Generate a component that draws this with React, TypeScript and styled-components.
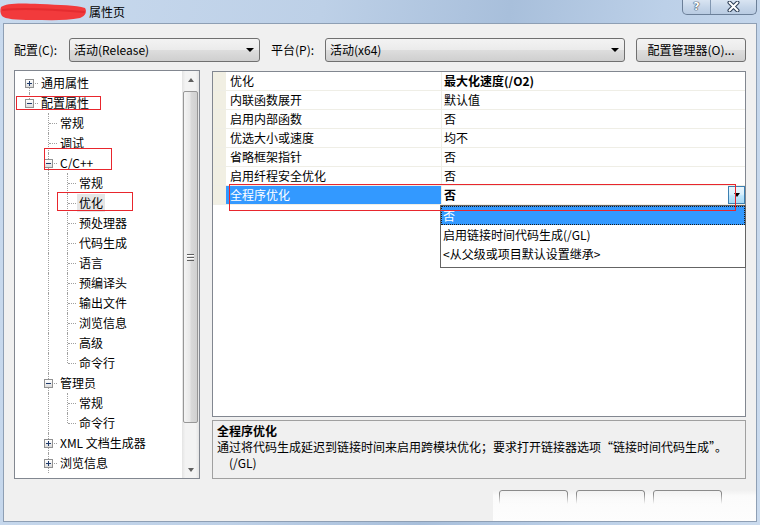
import React from 'react';
import styled, { createGlobalStyle } from 'styled-components';

const GlobalStyle = createGlobalStyle`
  html, body {
    margin: 0;
    padding: 0;
    background: #ffffff;
  }
  body {
    font-family: "Noto Sans CJK SC", "Microsoft YaHei", sans-serif;
    font-size: 12px;
    color: #000000;
  }
  * {
    box-sizing: border-box;
  }
`;

const Window = styled.div`
  position: relative;
  width: 760px;
  height: 525px;
  display: flex;
  flex-direction: column;
  overflow: hidden;
  background: linear-gradient(100deg, #c9daee 0%, #bdd0e7 38%, #a8bfdb 60%, #bcd0e8 78%, #cbdbee 100%);
`;

const TitleBar = styled.div`
  height: 23px;
  flex: none;
  display: flex;
  align-items: flex-start;
`;

const Scribble = styled.svg`
  flex: none;
  margin-top: 1px;
`;

const TitleText = styled.span`
  align-self: center;
  margin-left: 2px;
  line-height: 16px;
  color: #000;
`;

const CaptionGroup = styled.div`
  margin-left: auto;
  margin-right: 3px;
  margin-top: -1px;
  height: 16px;
  display: flex;
  border: 1px solid #6b7f98;
  border-top: none;
  border-radius: 0 0 5px 5px;
  overflow: hidden;
  background: linear-gradient(#dbe6f3, #c4d4e8 60%, #b9cbe2);
`;

const CaptionButton = styled.div<{ $w: number }>`
  width: ${(p) => p.$w}px;
  display: flex;
  align-items: center;
  justify-content: center;
  color: #fff;
  font-family: "DejaVu Sans", sans-serif;
  font-weight: bold;
  font-size: 11px;
  line-height: 14px;
  text-shadow: 0 0 1px #2d3e55, 0 0 1px #2d3e55, 0 0 1px #2d3e55;
  & + & {
    border-left: 1px solid #8196b0;
  }
`;

const Client = styled.div`
  flex: 1;
  margin: 0 3px 3px 3px;
  background: #f0f0f0;
  border: 1px solid #8e9fb4;
  display: flex;
  flex-direction: column;
  padding: 14px 10px 0 10px;
  min-height: 0;
`;

const Toolbar = styled.div`
  height: 24px;
  flex: none;
  display: flex;
  align-items: center;
`;

const FieldLabel = styled.span<{ $w: number; $gap?: number }>`
  width: ${(p) => p.$w}px;
  margin-left: ${(p) => p.$gap ?? 0}px;
  flex: none;
  line-height: 16px;
`;

const Combo = styled.div<{ $w: number }>`
  width: ${(p) => p.$w}px;
  height: 24px;
  flex: none;
  display: flex;
  align-items: center;
  padding: 0 5px 0 4px;
  border: 1px solid #707070;
  border-radius: 3px;
  background: linear-gradient(#f3f3f3 0%, #ebebeb 48%, #dddddd 52%, #cfcfcf 100%);
  line-height: 16px;
`;

const ComboText = styled.span`
  flex: 1;
`;

const ComboArrow = styled.span`
  width: 0;
  height: 0;
  border-left: 4px solid transparent;
  border-right: 4px solid transparent;
  border-top: 4px solid #000;
`;

const PushButton = styled.div<{ $w: number; $gap?: number }>`
  width: ${(p) => p.$w}px;
  height: 24px;
  flex: none;
  margin-left: ${(p) => p.$gap ?? 0}px;
  display: flex;
  align-items: center;
  justify-content: center;
  border: 1px solid #707070;
  border-radius: 3px;
  background: linear-gradient(#f3f3f3 0%, #ebebeb 48%, #dddddd 52%, #cfcfcf 100%);
  line-height: 16px;
`;

const Main = styled.div`
  margin-top: 8px;
  height: 409px;
  flex: none;
  display: flex;
  gap: 12px;
`;

const TreePanel = styled.div`
  width: 186px;
  flex: none;
  display: flex;
  border: 1px solid #828790;
  background: #fff;
  overflow: hidden;
`;

const TreeList = styled.div`
  flex: 1;
  padding: 2px 0 0 5px;
  overflow: hidden;
`;

const TreeRow = styled.div`
  height: 20px;
  display: flex;
  align-items: center;
  white-space: nowrap;
`;

const Guide = styled.span<{ $on: boolean }>`
  position: relative;
  width: 19px;
  height: 20px;
  flex: none;
  &::before {
    content: '';
    display: ${(p) => (p.$on ? 'block' : 'none')};
    position: absolute;
    left: 9px;
    top: 0;
    bottom: 0;
    border-left: 1px dotted #a0a0a0;
  }
`;

const Connector = styled.span<{ $top: boolean; $bottom: boolean }>`
  position: relative;
  width: 19px;
  height: 20px;
  flex: none;
  &::before {
    content: '';
    position: absolute;
    left: 9px;
    top: ${(p) => (p.$top ? 0 : 10)}px;
    bottom: ${(p) => (p.$bottom ? 0 : 10)}px;
    border-left: 1px dotted #a0a0a0;
  }
  &::after {
    content: '';
    position: absolute;
    left: 10px;
    right: 1px;
    top: 10px;
    border-top: 1px dotted #a0a0a0;
  }
`;

const Expander = styled.span<{ $plus: boolean }>`
  position: absolute;
  z-index: 1;
  left: 5px;
  top: 6px;
  width: 9px;
  height: 9px;
  border: 1px solid #919191;
  background: linear-gradient(#ffffff, #dcdcdc);
  &::before {
    content: '';
    position: absolute;
    left: 1px;
    right: 1px;
    top: 3px;
    height: 1px;
    background: #1e3a6b;
  }
  &::after {
    content: '';
    display: ${(p) => (p.$plus ? 'block' : 'none')};
    position: absolute;
    top: 1px;
    bottom: 1px;
    left: 3px;
    width: 1px;
    background: #1e3a6b;
  }
`;

const NodeLabel = styled.span<{ $selected?: boolean }>`
  display: inline-block;
  height: 18px;
  line-height: 18px;
  padding: 0 2px;
  background: ${(p) => (p.$selected ? '#e6e6e6' : 'transparent')};
`;

const ScrollBar = styled.div`
  width: 17px;
  flex: none;
  display: flex;
  flex-direction: column;
  background: linear-gradient(90deg, #e4e4e4, #f3f3f3 20%, #f3f3f3 80%, #e4e4e4);
`;

const ScrollArrow = styled.div<{ $up: boolean }>`
  height: 17px;
  flex: none;
  display: flex;
  align-items: center;
  justify-content: center;
  margin-top: ${(p) => (p.$up ? 0 : 'auto')};
  &::before {
    content: '';
    width: 0;
    height: 0;
    border-left: 3.5px solid transparent;
    border-right: 3.5px solid transparent;
    ${(p) => (p.$up ? 'border-bottom: 4px solid #606060;' : 'border-top: 4px solid #606060;')}
  }
`;

const ScrollThumb = styled.div`
  margin: 3px 1px 0 1px;
  height: 332px;
  flex: none;
  display: flex;
  align-items: center;
  justify-content: center;
  border: 1px solid #979797;
  border-radius: 2px;
  background: linear-gradient(90deg, #f4f4f4, #e8e8e8 45%, #d9d9d9 55%, #d0d0d0);
`;

const Grip = styled.span`
  width: 7px;
  height: 7px;
  background: repeating-linear-gradient(#5f5f5f 0 1px, #ffffff 1px 2px, transparent 2px 3px);
`;

const RightColumn = styled.div`
  flex: 1;
  display: flex;
  flex-direction: column;
  gap: 3px;
  padding-top: 1px;
`;

const Grid = styled.div`
  position: relative;
  height: 346px;
  flex: none;
  border: 1px solid #828790;
  background: #fff;
`;

const PropRow = styled.div`
  height: 19px;
  display: flex;
  border-bottom: 1px solid #efeee6;
`;

const PropMargin = styled.div`
  width: 13px;
  flex: none;
  background: #f1efe3;
`;

const PropName = styled.div<{ $selected?: boolean }>`
  width: 215px;
  flex: none;
  padding-left: 4px;
  line-height: 18px;
  background: ${(p) => (p.$selected ? '#3399ff' : '#ffffff')};
  color: ${(p) => (p.$selected ? '#ffffff' : '#000000')};
`;

const PropValue = styled.div<{ $bold?: boolean }>`
  flex: 1;
  display: flex;
  padding-left: 2px;
  line-height: 18px;
  border-left: 1px solid #efeee6;
  font-weight: ${(p) => (p.$bold ? 'bold' : 'normal')};
`;

const ValueText = styled.span`
  flex: 1;
`;

const DropButton = styled.span`
  width: 17px;
  height: 18px;
  flex: none;
  display: flex;
  align-items: center;
  justify-content: center;
  border: 1px solid #3c7fb1;
  background: linear-gradient(#eaf6fd, #d9f0fc 45%, #bee6fd 55%, #a7d9f5);
  &::before {
    content: '';
    width: 0;
    height: 0;
    border-left: 3.5px solid transparent;
    border-right: 3.5px solid transparent;
    border-top: 4px solid #000;
  }
`;

const DropList = styled.div`
  position: absolute;
  left: 227px;
  top: 133px;
  width: 306px;
  height: 63px;
  border: 1px solid #646464;
  background: #fff;
  z-index: 2;
`;

const DropItem = styled.div<{ $active?: boolean }>`
  height: 19px;
  line-height: 19px;
  padding-left: 2px;
  background: ${(p) => (p.$active ? '#3399ff' : 'transparent')};
  color: ${(p) => (p.$active ? '#ffffff' : '#000000')};
  outline: ${(p) => (p.$active ? '1px dotted #1a1a1a' : 'none')};
  outline-offset: -1px;
`;

const Description = styled.div`
  flex: 1;
  border: 1px solid #a0a0a0;
  background: #f0f0f0;
  padding: 2px 4px 0 4px;
  line-height: 16px;
`;

const DescTitle = styled.div`
  font-weight: bold;
`;

const DescLine = styled.div<{ $indent?: number }>`
  padding-left: ${(p) => p.$indent ?? 0}px;
  white-space: nowrap;
`;

const ButtonRow = styled.div`
  flex: 1;
  margin: 11px -10px 0 -10px;
  display: flex;
  justify-content: flex-end;
`;

const ButtonGroup = styled.div`
  display: flex;
  gap: 8px;
  padding: 0 34px 0 6px;
  background: linear-gradient(rgba(250, 250, 250, 0) 0px, rgba(252, 252, 252, 0.9) 6px, #fdfdfd 100%);
`;

const DialogButton = styled.div`
  width: 69px;
  height: 30px;
  border: 1px solid #8a8a8a;
  border-bottom: none;
  border-radius: 3px 3px 0 0;
  background: linear-gradient(#f2f2f2, #fbfbfb 40%, #ffffff);
  -webkit-mask-image: linear-gradient(#000 0, #000 4px, transparent 14px);
  mask-image: linear-gradient(#000 0, #000 4px, transparent 14px);
`;

const Annotation = styled.div<{ $x: number; $y: number; $w: number; $h: number }>`
  position: absolute;
  left: ${(p) => p.$x}px;
  top: ${(p) => p.$y}px;
  width: ${(p) => p.$w}px;
  height: ${(p) => p.$h}px;
  border: 1px solid #e8262d;
  pointer-events: none;
  z-index: 5;
`;

type TreeNode = {
  label: string;
  level: number;
  exp?: '+' | '-';
  first?: boolean;
  last?: boolean;
  guides: boolean[];
  selected?: boolean;
};

const cc = ['常规', '优化', '预处理器', '代码生成', '语言', '预编译头', '输出文件', '浏览信息', '高级', '命令行'];

// the list runs on past the bottom of the panel, so the last node still has a line below it
const tree: TreeNode[] = [
  { label: '通用属性', level: 0, exp: '+', first: true, guides: [] },
  { label: '配置属性', level: 0, exp: '-', last: true, guides: [] },
  { label: '常规', level: 1, guides: [false] },
  { label: '调试', level: 1, guides: [false] },
  { label: 'C/C++', level: 1, exp: '-', guides: [false] },
  ...cc.map((label, i) => ({
    label,
    level: 2,
    guides: [false, true],
    last: i === cc.length - 1,
    selected: label === '优化',
  })),
  { label: '管理员', level: 1, exp: '-', guides: [false] },
  { label: '常规', level: 2, guides: [false, true] },
  { label: '命令行', level: 2, last: true, guides: [false, true] },
  { label: 'XML 文档生成器', level: 1, exp: '+', guides: [false] },
  { label: '浏览信息', level: 1, exp: '+', guides: [false] },
];

const props = [
  { name: '优化', value: '最大化速度(/O2)', bold: true },
  { name: '内联函数展开', value: '默认值' },
  { name: '启用内部函数', value: '否' },
  { name: '优选大小或速度', value: '均不' },
  { name: '省略框架指针', value: '否' },
  { name: '启用纤程安全优化', value: '否' },
  { name: '全程序优化', value: '否', bold: true, selected: true },
];

const App: React.FC = () => {
  return (
    <>
      <GlobalStyle />
      <Window>
        <TitleBar>
          <Scribble width="87" height="21" viewBox="0 0 87 21">
            <path
              d="M1 6 C 6 2, 20 2, 40 3 C 60 4, 76 4, 85 7 C 87 10, 86 15, 80 17 C 66 20, 48 19, 32 19 C 16 19, 5 18, 2 15 C 0 12, 0 9, 1 6 Z"
              fill="#f23a3c"
            />
            <path d="M3 9 C 20 7, 50 8, 84 11" stroke="#e52c30" strokeWidth="2" fill="none" strokeLinecap="round" />
          </Scribble>
          <TitleText>属性页</TitleText>
          <CaptionGroup>
            <CaptionButton $w={27}>?</CaptionButton>
            <CaptionButton $w={46}>
              <svg width="13" height="11" viewBox="0 0 13 11">
                <path d="M2.5 1.5 L10.5 9.5 M10.5 1.5 L2.5 9.5" stroke="#2d3e55" strokeWidth="4" strokeLinecap="round" />
                <path d="M2.5 1.5 L10.5 9.5 M10.5 1.5 L2.5 9.5" stroke="#ffffff" strokeWidth="2" strokeLinecap="round" />
              </svg>
            </CaptionButton>
          </CaptionGroup>
        </TitleBar>

        <Client>
          <Toolbar>
            <FieldLabel $w={55}>配置(C):</FieldLabel>
            <Combo $w={191}>
              <ComboText>活动(Release)</ComboText>
              <ComboArrow />
            </Combo>
            <FieldLabel $w={54} $gap={11}>
              平台(P):
            </FieldLabel>
            <Combo $w={300}>
              <ComboText>活动(x64)</ComboText>
              <ComboArrow />
            </Combo>
            <PushButton $w={110} $gap={11}>
              配置管理器(O)...
            </PushButton>
          </Toolbar>

          <Main>
            <TreePanel>
              <TreeList>
                {tree.map((n, i) => (
                  <TreeRow key={i}>
                    {n.guides.map((g, j) => (
                      <Guide key={j} $on={g} />
                    ))}
                    <Connector $top={!n.first} $bottom={!n.last}>
                      {n.exp && <Expander $plus={n.exp === '+'} />}
                    </Connector>
                    <NodeLabel $selected={n.selected}>{n.label}</NodeLabel>
                  </TreeRow>
                ))}
              </TreeList>
              <ScrollBar>
                <ScrollArrow $up />
                <ScrollThumb>
                  <Grip />
                </ScrollThumb>
                <ScrollArrow $up={false} />
              </ScrollBar>
            </TreePanel>

            <RightColumn>
              <Grid>
                {props.map((p) => (
                  <PropRow key={p.name}>
                    <PropMargin />
                    <PropName $selected={p.selected}>{p.name}</PropName>
                    <PropValue $bold={p.bold}>
                      <ValueText>{p.value}</ValueText>
                      {p.selected && <DropButton />}
                    </PropValue>
                  </PropRow>
                ))}
                <DropList>
                  <DropItem $active>否</DropItem>
                  <DropItem>启用链接时间代码生成(/GL)</DropItem>
                  <DropItem>&lt;从父级或项目默认设置继承&gt;</DropItem>
                </DropList>
              </Grid>
              <Description>
                <DescTitle>全程序优化</DescTitle>
                <DescLine>通过将代码生成延迟到链接时间来启用跨模块优化；要求打开链接器选项“链接时间代码生成”。</DescLine>
                <DescLine $indent={12}>(/GL)</DescLine>
              </Description>
            </RightColumn>
          </Main>

          <ButtonRow>
            <ButtonGroup>
              <DialogButton />
              <DialogButton />
              <DialogButton />
            </ButtonGroup>
          </ButtonRow>
        </Client>

        <Annotation $x={16} $y={96} $w={85} $h={14} />
        <Annotation $x={44} $y={148} $w={68} $h={22} />
        <Annotation $x={57} $y={192} $w={76} $h={19} />
        <Annotation $x={229} $y={184} $w={507} $h={27} />
      </Window>
    </>
  );
};

export default App;
